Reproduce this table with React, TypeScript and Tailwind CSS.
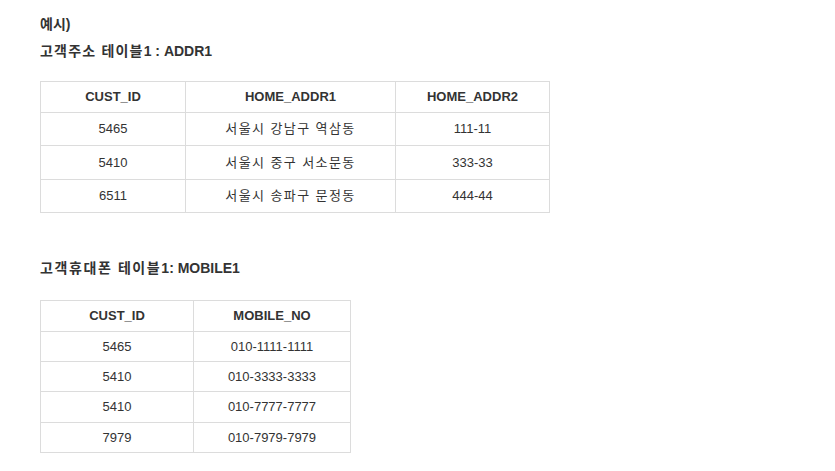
export default function App() {
  const font = { fontFamily: '"Liberation Sans", Arial, "Noto Sans CJK KR", sans-serif' };
  const t1 = [
    ["5465", "서울시 강남구 역삼동", "111-11"],
    ["5410", "서울시 중구 서소문동", "333-33"],
    ["6511", "서울시 송파구 문정동", "444-44"],
  ];
  const t1h = ["h-[33px]", "h-[34px]", "h-[33px]"];
  const t2 = [
    ["5465", "010-1111-1111"],
    ["5410", "010-3333-3333"],
    ["5410", "010-7777-7777"],
    ["7979", "010-7979-7979"],
  ];
  const t2h = ["h-[30px]", "h-[30px]", "h-[31px]", "h-[30px]"];
  return (
    <div className="min-h-[471px] w-[835px] bg-white pl-[40px] text-[#333]" style={font}>
      <p className="mt-[12px] h-[24px] text-[14px] font-bold leading-[24px]">예시)</p>
      <p className="mt-[3px] h-[24px] text-[14px] font-bold leading-[24px]">
        <span className="tracking-[1.2px]">고객주소 테이블</span>1 : ADDR1
      </p>
      <table className="mt-[18px] w-[509px] table-fixed border-collapse text-[13px]">
        <colgroup>
          <col className="w-[145px]" />
          <col className="w-[210px]" />
          <col className="w-[154px]" />
        </colgroup>
        <thead>
          <tr className="h-[31px]">
            <th className="border border-[#dcdcdc] text-center font-bold">CUST_ID</th>
            <th className="border border-[#dcdcdc] text-center font-bold">HOME_ADDR1</th>
            <th className="border border-[#dcdcdc] text-center font-bold">HOME_ADDR2</th>
          </tr>
        </thead>
        <tbody>
          {t1.map((r, i) => (
            <tr key={i} className={t1h[i]}>
              {r.map((c, j) => (
                <td
                  key={j}
                  className={
                    j === 1
                      ? "border border-[#dcdcdc] text-center font-normal tracking-[1.4px]"
                      : "border border-[#dcdcdc] text-center font-normal"
                  }
                >
                  {c}
                </td>
              ))}
            </tr>
          ))}
        </tbody>
      </table>
      <p className="mt-[43px] h-[24px] text-[14px] font-bold leading-[24px]">
        <span className="tracking-[1.6px]">고객휴대폰 테이블</span>1: MOBILE1
      </p>
      <table className="mt-[20px] w-[310px] table-fixed border-collapse text-[13px]">
        <colgroup>
          <col className="w-[153px]" />
          <col className="w-[157px]" />
        </colgroup>
        <thead>
          <tr className="h-[31px]">
            <th className="border border-[#dcdcdc] text-center font-bold">CUST_ID</th>
            <th className="border border-[#dcdcdc] text-center font-bold">MOBILE_NO</th>
          </tr>
        </thead>
        <tbody>
          {t2.map((r, i) => (
            <tr key={i} className={t2h[i]}>
              {r.map((c, j) => (
                <td key={j} className="border border-[#dcdcdc] text-center font-normal">{c}</td>
              ))}
            </tr>
          ))}
        </tbody>
      </table>
    </div>
  );
}
